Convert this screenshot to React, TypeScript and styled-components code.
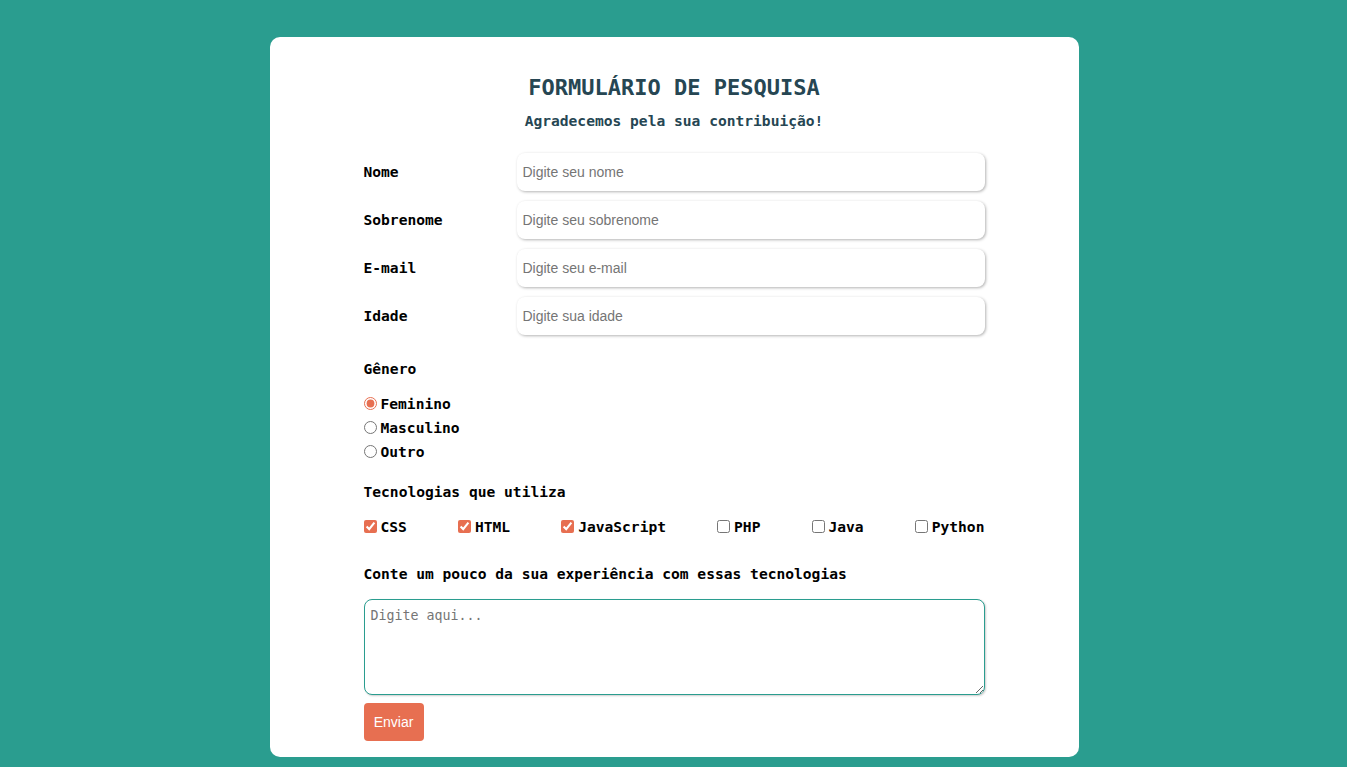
import React from "react";
import styled, { createGlobalStyle } from "styled-components";

const GlobalStyle = createGlobalStyle`
  html, body { margin: 0; padding: 0; }
  body {
    background: #2a9d8f;
    font-family: "DejaVu Sans Mono", "Liberation Mono", monospace;
    min-height: 767px;
  }
  * { box-sizing: border-box; }
`;

const Page = styled.div`
  display: flex;
  justify-content: center;
  padding: 37px 0 10px 1px;
`;

const Card = styled.main`
  width: 809px;
  background: #ffffff;
  border-radius: 10px;
  padding: 37px 94px 16px;
  display: flex;
  flex-direction: column;
`;

const Title = styled.h1`
  margin: 0;
  font-size: 22px;
  line-height: 28px;
  font-weight: bold;
  color: #264653;
  text-align: center;
`;

const Subtitle = styled.p`
  margin: 9px 0 22px;
  font-size: 14.6px;
  line-height: 20px;
  font-weight: bold;
  color: #264653;
  text-align: center;
`;

const Form = styled.form`
  display: flex;
  flex-direction: column;
`;

const Row = styled.div`
  display: grid;
  grid-template-columns: 153px 1fr;
  align-items: center;
  height: 38px;
  margin-bottom: 10px;
`;

const Label = styled.label`
  font-size: 14.6px;
  line-height: 20px;
  font-weight: bold;
  color: #000;
`;

const TextInput = styled.input`
  height: 38px;
  width: 100%;
  border: none;
  border-radius: 8px;
  padding: 0 6px;
  font-family: "Liberation Sans", Arial, sans-serif;
  font-size: 14px;
  box-shadow: 1px 1px 3px rgba(0, 0, 0, 0.3);
  outline: none;
  &::placeholder { color: #757575; }
`;

const SectionTitle = styled.div<{ $top: number; $bottom: number }>`
  margin-top: ${(p) => p.$top}px;
  margin-bottom: ${(p) => p.$bottom}px;
  font-size: 14.6px;
  line-height: 20px;
  font-weight: bold;
  color: #000;
`;

const RadioList = styled.div`
  display: flex;
  flex-direction: column;
`;

const Option = styled.label`
  display: flex;
  align-items: center;
  height: 24px;
  font-size: 14.6px;
  font-weight: bold;
  color: #000;
  input {
    margin: 0 4px 0 0;
    width: 13px;
    height: 13px;
    accent-color: #e76f51;
  }
`;

const CheckRow = styled.div`
  display: flex;
  justify-content: space-between;
`;

const TextArea = styled.textarea`
  width: 100%;
  height: 96px;
  border: 1px solid #2a9d8f;
  border-radius: 8px;
  padding: 8px 6px 6px;
  font-family: "DejaVu Sans Mono", "Liberation Mono", monospace;
  font-size: 13.3px;
  box-shadow: 1px 1px 2px rgba(0, 0, 0, 0.2);
  outline: none;
  resize: both;
  &::placeholder { color: #757575; }
`;

const SubmitButton = styled.button`
  align-self: flex-start;
  margin-top: 8px;
  width: 60px;
  height: 38px;
  border: none;
  border-radius: 4px;
  background: #e76f51;
  color: #ffffff;
  font-family: "Liberation Sans", Arial, sans-serif;
  font-size: 14px;
  cursor: pointer;
`;

const fields = [
  { id: "nome", label: "Nome", ph: "Digite seu nome" },
  { id: "sobrenome", label: "Sobrenome", ph: "Digite seu sobrenome" },
  { id: "email", label: "E-mail", ph: "Digite seu e-mail" },
  { id: "idade", label: "Idade", ph: "Digite sua idade" },
];

const techs = [
  { name: "CSS", checked: true },
  { name: "HTML", checked: true },
  { name: "JavaScript", checked: true },
  { name: "PHP", checked: false },
  { name: "Java", checked: false },
  { name: "Python", checked: false },
];

export default function App() {
  return (
    <>
      <GlobalStyle />
      <Page>
        <Card>
          <Title>FORMULÁRIO DE PESQUISA</Title>
          <Subtitle>Agradecemos pela sua contribuição!</Subtitle>
          <Form onSubmit={(e) => e.preventDefault()}>
            {fields.map((f) => (
              <Row key={f.id}>
                <Label htmlFor={f.id}>{f.label}</Label>
                <TextInput id={f.id} placeholder={f.ph} />
              </Row>
            ))}
            <SectionTitle $top={14} $bottom={12}>Gênero</SectionTitle>
            <RadioList>
              <Option>
                <input type="radio" name="genero" defaultChecked />
                Feminino
              </Option>
              <Option>
                <input type="radio" name="genero" />
                Masculino
              </Option>
              <Option>
                <input type="radio" name="genero" />
                Outro
              </Option>
            </RadioList>
            <SectionTitle $top={19} $bottom={12}>Tecnologias que utiliza</SectionTitle>
            <CheckRow>
              {techs.map((t) => (
                <Option key={t.name}>
                  <input type="checkbox" defaultChecked={t.checked} />
                  {t.name}
                </Option>
              ))}
            </CheckRow>
            <SectionTitle $top={26} $bottom={15}>
              Conte um pouco da sua experiência com essas tecnologias
            </SectionTitle>
            <TextArea placeholder="Digite aqui..." />
            <SubmitButton type="submit">Enviar</SubmitButton>
          </Form>
        </Card>
      </Page>
    </>
  );
}
